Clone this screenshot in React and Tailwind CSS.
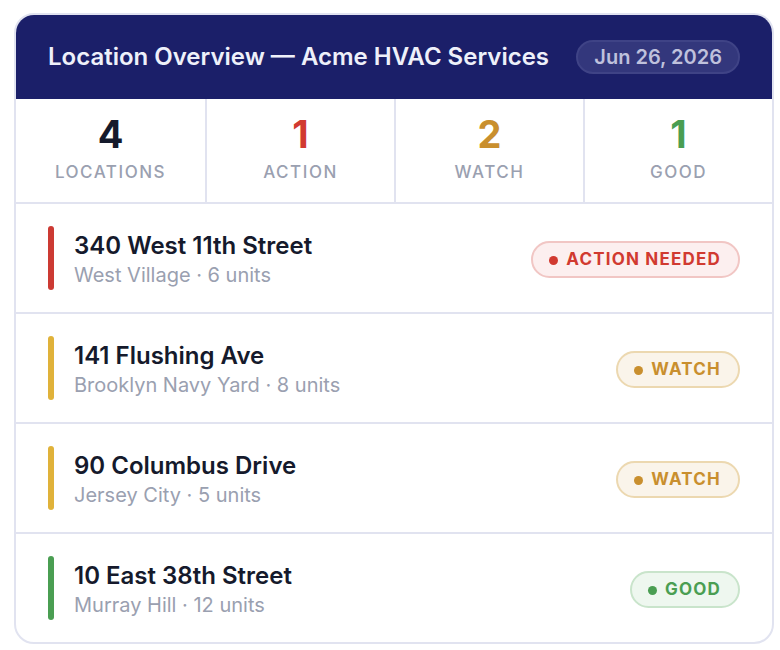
const stats = [
  { value: 4, label: "LOCATIONS", color: "text-[#151a2c]" },
  { value: 1, label: "ACTION", color: "text-[#d13a30]" },
  { value: 2, label: "WATCH", color: "text-[#c98f2e]" },
  { value: 1, label: "GOOD", color: "text-[#4a9e52]" },
];

const badgeStyles = {
  action: {
    bar: "bg-[#cc3a33]",
    pill: "bg-[#fcefef] border-[#f1c6c4] text-[#d13a30]",
    dot: "bg-[#d13a30]",
    text: "ACTION NEEDED",
  },
  watch: {
    bar: "bg-[#e0b23a]",
    pill: "bg-[#faf4ea] border-[#ecd8b0] text-[#c98f2e]",
    dot: "bg-[#c98f2e]",
    text: "WATCH",
  },
  good: {
    bar: "bg-[#4a9e52]",
    pill: "bg-[#eef7ef] border-[#c9e4cb] text-[#4a9e52]",
    dot: "bg-[#4a9e52]",
    text: "GOOD",
  },
};

const locations = [
  { name: "340 West 11th Street", area: "West Village", units: 6, status: "action" },
  { name: "141 Flushing Ave", area: "Brooklyn Navy Yard", units: 8, status: "watch" },
  { name: "90 Columbus Drive", area: "Jersey City", units: 5, status: "watch" },
  { name: "10 East 38th Street", area: "Murray Hill", units: 12, status: "good" },
];

function StatusBadge({ status }) {
  const s = badgeStyles[status];
  return (
    <span className={`mt-[3px] flex h-[37px] items-center gap-[8px] rounded-full border-2 pl-[16px] pr-[17px] pt-[1px] text-[17px] font-bold tracking-[0.07em] ${s.pill}`}>
      <span className={`h-[9px] w-[9px] rounded-full ${s.dot}`}></span>
      {s.text}
    </span>
  );
}

export default function App() {
  return (
    <div className="min-h-[650px] bg-white pl-[14px] pt-[13px] font-['Inter',sans-serif]">
      <div className="w-[760px] overflow-hidden rounded-[20px] border-2 border-[#e1e3f0] bg-white">
        {/* Header */}
        <div className="flex h-[84px] items-center justify-between bg-[#1b1f69] pl-[32px] pr-[32px]">
          <h1 className="text-[24px] font-semibold text-[#eef0fa]">
            Location Overview — Acme HVAC Services
          </h1>
          <span className="flex h-[34px] items-center rounded-full border-2 border-[#3f4386] bg-[#33377c] px-[16px] text-[20px] font-semibold text-[#bfc1dc]">
            Jun 26, 2026
          </span>
        </div>

        {/* Summary counts */}
        <div className="grid h-[105px] grid-cols-4 border-b-2 border-[#e1e3f0]">
          {stats.map((st, i) => (
            <div
              key={st.label}
              className={`flex flex-col items-center justify-center ${i > 0 ? "border-l-2 border-[#e1e3f0]" : ""}`}
            >
              <div className={`text-[38px] font-bold leading-none ${st.color}`}>{st.value}</div>
              <div className="mt-[7px] text-[17px] font-medium tracking-[0.09em] text-[#9aa0b0]">
                {st.label}
              </div>
            </div>
          ))}
        </div>

        {/* Location rows */}
        {locations.map((loc, i) => {
          const last = i === locations.length - 1;
          return (
            <div
              key={loc.name}
              className={`flex items-center justify-between pl-[32px] pr-[32px] ${last ? "h-[108px]" : "h-[110px] border-b-2 border-[#e1e3f0]"}`}
            >
              <div className="flex items-center gap-[20px]">
                <div className={`h-[64px] w-[6px] rounded-full ${badgeStyles[loc.status].bar}`}></div>
                <div className="pt-[3px]">
                  <div className="text-[24px] font-semibold leading-[30px] text-[#151a2c]">{loc.name}</div>
                  <div className="text-[20px] leading-[28px] text-[#9aa0b0]">
                    {loc.area} · {loc.units} units
                  </div>
                </div>
              </div>
              <StatusBadge status={loc.status} />
            </div>
          );
        })}
      </div>
    </div>
  );
}
